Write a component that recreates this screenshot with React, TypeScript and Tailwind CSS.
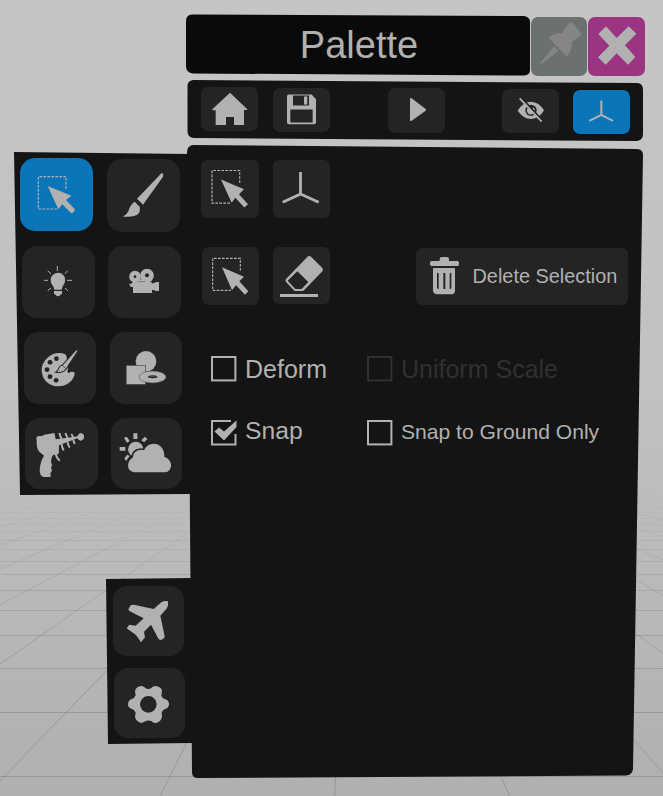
import React from "react";

const INK = "#b1b1b1";

type IconProps = { viewBox: string; children: React.ReactNode };

function Glyph({ viewBox, children }: IconProps) {
  return (
    <svg viewBox={viewBox} preserveAspectRatio="none" className="block h-full w-full" fill={INK} stroke="none">
      {children}
    </svg>
  );
}

function Key({ className, label, children }: { className: string; label: string; children: React.ReactNode }) {
  return (
    <button aria-label={label} className={`block shrink-0 overflow-hidden ${className}`}>
      {children}
    </button>
  );
}

function SelectShape() {
  return (
    <>
      <path d="M168 131V95H85V192H141" fill="none" stroke={INK} strokeWidth="3.6" strokeDasharray="8 4" />
      <path d="M113 123L184 152L168 165L194 192Q196 197 191 201Q187 205 182 203L157 178L145 193Z" />
    </>
  );
}

function Scene() {
  const rows = [776.5, 712.5, 668.5, 635.5, 610.5, 590.5, 574.5, 561.5, 549.5, 540.5, 531.5, 524.5, 518.5, 512.5, 507.5, 503.5, 499.5, 496.5];
  const rays = Array.from({ length: 20 }, (_, i) => -4.715 + i * 0.4685);
  return (
    <svg className="absolute inset-0 h-full w-full" viewBox="0 0 663 796">
      <defs>
        <linearGradient id="fade" gradientUnits="userSpaceOnUse" x1="0" y1="490" x2="0" y2="700">
          <stop offset="0" stopColor="#858585" stopOpacity="0" />
          <stop offset=".4" stopColor="#858585" stopOpacity=".3" />
          <stop offset="1" stopColor="#858585" stopOpacity=".6" />
        </linearGradient>
      </defs>
      <g stroke="url(#fade)" fill="none">
        {rows.map((y) => (
          <path key={y} d={`M0 ${y}L663 ${y + 0.01}`} strokeWidth="1" />
        ))}
        {rays.map((m) => (
          <path key={m} d={`M${346 + m * 67} 490L${346 + m * 374} 797`} strokeWidth="1" />
        ))}
      </g>
    </svg>
  );
}

function Check({ on, dim }: { on?: boolean; dim?: boolean }) {
  const c = dim ? "#303030" : INK;
  return (
    <svg width="28" height="28" viewBox="0 0 28 28" className="block shrink-0">
      {on ? (
        <>
          <path d="M21 2H2V25.5H25.500V15" fill="none" stroke={c} strokeWidth="2" />
          <path d="M4.500 12.500L9 8.500L14 12.500L26.500 1.500V8L14 21.500Z" fill={c} />
        </>
      ) : (
        <rect x="2" y="2" width="23.4" height="23.4" fill="none" stroke={c} strokeWidth="2" />
      )}
    </svg>
  );
}

function Option({ label, on, dim, text }: { label: string; on?: boolean; dim?: boolean; text: string }) {
  return (
    <label className="flex h-[28px] items-start whitespace-nowrap">
      <Check on={on} dim={dim} />
      <span className={`ml-[7px] ${text}`}>{label}</span>
    </label>
  );
}

function SideTools() {
  return (
    <nav className="ml-[14px] h-[343px] w-[176px] bg-[#141414] pt-[6px] [clip-path:polygon(0_0,176px_2px,176px_342px,6px_343px)]">
      <div className="flex h-[88px] gap-[14px] pl-[6px]">
        <Key label="Select" className="h-[73px] w-[73px] rounded-[15px] bg-[#0a75b8]">
          <Glyph viewBox="30 39 219 219"><SelectShape /></Glyph>
        </Key>
        <Key label="Brush" className="mt-px h-[73px] w-[73px] rounded-[15px] bg-[#242424]">
          <Glyph viewBox="291 42 219 219">
            <path d="M455 84Q461 84 459 95L399 179L381 161Z" />
            <path d="M374 170L389 185Q393 202 379 211Q362 217 339 215Q350 210 355 199Q361 178 374 170Z" />
          </Glyph>
        </Key>
      </div>
      <div className="flex h-[86px] gap-[13px] pl-[8px]">
        <Key label="Light" className="h-[72px] w-[73px] rounded-[15px] bg-[#242424]">
          <Glyph viewBox="36 303 219 216">
            <path d="M133 434Q132 427 127 420Q117 405 126 392Q134 383 144 383Q157 384 163 394Q169 407 160 421Q155 428 155 434Z" />
            <path d="M132 438H156V446Q154 449 151 449Q149 454 143 454Q138 453 137 449Q132 448 132 446Z" />
            <path d="M142 363V378M102 406H114M171 406H186M113 377L123 387M173 377L165 386M113 437L123 429M173 437L165 429" fill="none" stroke={INK} strokeWidth="3" />
          </Glyph>
        </Key>
        <Key label="Camera" className="h-[72px] w-[73px] rounded-[15px] bg-[#242424]">
          <Glyph viewBox="294 303 219 216">
            <circle cx="375" cy="395" r="17.5" />
            <circle cx="411" cy="392" r="20.5" />
            <path d="M380 403H406V410H425V416L440 411H447V438H440L426 434V444H369V426H361V421H358V416H364L370 409Z" />
            <circle cx="375" cy="395" r="4" fill="#242424" />
            <circle cx="411" cy="391" r="6" fill="#242424" />
            <path d="M383 410H405" stroke="#777" strokeWidth="3" />
          </Glyph>
        </Key>
      </div>
      <div className="flex h-[86px] gap-[13.5px] pl-[9.5px]">
        <Key label="Colors" className="h-[72px] w-[72.5px] rounded-[15px] bg-[#242424]">
          <Glyph viewBox="40 36 217 216">
            <path d="M164 103Q135 92 112 112Q91 130 93 155Q97 188 130 198Q162 203 182 182Q194 167 191 157Q181 153 175 159Q168 157 171 149Q174 141 169 132L168 112Z" />
            <circle cx="137" cy="116" r="7" fill="#242424" />
            <circle cx="118" cy="127" r="7.3" fill="#242424" />
            <circle cx="109" cy="149" r="7.3" fill="#242424" />
            <circle cx="118" cy="170" r="7.3" fill="#242424" />
            <circle cx="136" cy="181" r="7.3" fill="#242424" />
            <path d="M197 88L202 92L166 147Q158 160 134 157Q143 152 144 144Q148 136 154 136Z" stroke="#242424" strokeWidth="3" />
            <path d="M154 135L165 146" stroke="#242424" strokeWidth="2" />
          </Glyph>
        </Key>
        <Key label="Shapes" className="h-[72px] w-[72px] rounded-[15px] bg-[#242424]">
          <Glyph viewBox="298 36 216 216">
            <circle cx="406" cy="124" r="31" />
            <rect x="346.500" y="136" width="58" height="57" stroke="#484848" strokeWidth="2" />
            <ellipse cx="425.500" cy="171" rx="40.500" ry="18" stroke="#484848" strokeWidth="1.500" />
            <path d="M410 172Q417 165 426 165Q436 165 442 172Q426 177 410 172Z" fill="#1b1b1b" />
            <path d="M418 168H434" stroke={INK} strokeWidth="2" />
          </Glyph>
        </Key>
      </div>
      <div className="flex gap-[13px] pl-[11px]">
        <Key label="Ray gun" className="h-[71px] w-[72.5px] rounded-[15px] bg-[#242424]">
          <Glyph viewBox="45 294 217 213">
            <path d="M79 354Q80 348 87 348H97L102 344L133 339L137 358L149 356L195 350L202 349Q204 340 212 339Q222 341 222 351Q221 361 211 362Q204 361 202 355L147 376L146 401L131 404L127 407Q120 425 126 434L123 444L126 451L121 460L122 471H101Q88 468 89 447Q91 424 102 407L96 402Q80 393 80 372V362Z" />
            <path d="M148 339Q150 350 155 356M166 339Q169 349 173 354M184 342Q187 350 192 354M155 373Q155 382 161 391M173 367Q173 375 179 383M190 359Q190 367 195 371M137 401Q139 414 149 422" fill="none" stroke={INK} strokeWidth="6" />
          </Glyph>
        </Key>
        <Key label="Sky" className="h-[71px] w-[71.5px] rounded-[15px] bg-[#242424]">
          <Glyph viewBox="302 294 214 213">
            <circle cx="376" cy="388" r="23" />
            <path d="M369 340H381V357H369ZM341 354L349 350L358 363L350 368ZM403 350L411 357L401 367L393 361ZM328 381H345V392H328ZM342 415L351 404L358 408L347 423Z" />
            <path d="M372 457Q353 455 353 436Q354 420 367 413Q369 390 391 389L401 391Q409 372 430 371Q461 373 462 411Q481 417 482 437Q480 455 464 457Z" stroke="#242424" strokeWidth="9" />
            <path d="M372 457Q353 455 353 436Q354 420 367 413Q369 390 391 389L401 391Q409 372 430 371Q461 373 462 411Q481 417 482 437Q480 455 464 457Z" />
          </Glyph>
        </Key>
      </div>
    </nav>
  );
}

function SideSystem() {
  return (
    <nav className="ml-[106px] mt-[83px] flex h-[166px] w-[86px] flex-col gap-[12px] bg-[#141414] pl-[7px] pt-[8px] [clip-path:polygon(0_1px,86px_0,86px_165px,2px_166px)]">
      <Key label="Travel" className="h-[70px] w-[71px] rounded-[14px] bg-[#242424]">
        <Glyph viewBox="39 48 213 210">
          <path d="M85 118L92 106Q98 103 105 105L161 117L184 97Q194 91 204 94Q206 108 199 117L181 137L194 199Q195 206 182 210Q177 210 174 204L153 164L132 185L135 202L123 217L108 195L80 175L88 164L107 167L131 145L88 123Z" />
        </Glyph>
      </Key>
      <Key label="Settings" className="ml-px h-[70px] w-[71px] rounded-[14px] bg-[#242424]">
        <Glyph viewBox="42 294 213 210">
          <path fillRule="evenodd" d="M107 357Q114 347 125 348Q132 349 137 355Q145 359 153 355Q159 348 167 348Q181 349 186 361L184 377Q187 386 196 388Q207 391 207 403Q206 415 195 417Q187 420 185 428L186 441Q183 455 169 459Q160 460 154 453Q145 450 137 453Q130 460 121 458Q108 454 105 441L107 428Q103 419 96 417Q84 414 84 403Q85 389 96 387Q104 384 107 376L105 365ZM145 378A25 25 0 1 0 145 428A25 25 0 1 0 145 378Z" />
        </Glyph>
      </Key>
    </nav>
  );
}

function TitleBar() {
  return (
    <header className="-ml-px flex h-[62px] gap-px">
      <h1 className="h-[62px] w-[344px] bg-[#0a0a0a] pl-[2px] text-center text-[38px] leading-[62px] text-[#b1b1b1] [clip-path:path('M6_0.500L338_2Q344_3_344_8V56Q344_61_338_61.500L7_59.500Q0_59_0_52V7Q0_1_6_0.500Z')]">
        Palette
      </h1>
      <Key label="Pin" className="mt-[2.500px] h-[59px] w-[56px] rounded-[7px] bg-[#6b7071]">
        <svg viewBox="333 27 168 177" className="h-full w-full" fill="#858585">
          <path d="M450 44Q456 43 461 49L484 76Q486 82 479 84L456 103Q457 125 443 143L439 144L388 92V87Q404 75 426 75L444 49ZM404 113L417 127L369 165L361 169L365 160Z" />
          <path d="M402 112L414 127" stroke="#6b7071" strokeWidth="2" />
        </svg>
      </Key>
      <Key label="Close" className="mt-[3px] h-[59px] w-[57px] rounded-[7px] bg-[#9b3483]">
        <Glyph viewBox="503 28 171 177">
          <path d="M557 56L589 91L625 56L648 78L614 113L645 148L623 171L589 137L556 171L533 149L567 114L534 79Z" />
        </Glyph>
      </Key>
    </header>
  );
}

function Toolbar() {
  return (
    <div className="mt-[4px] flex h-[61px] w-[457px] bg-[#141414] pl-[14px] [clip-path:path('M6_0L450_3Q456_3_456_10V54Q456_60_450_61L7_58Q0.500_58_0.500_51V7Q0_1_6_0Z')]">
      <Key label="Home" className="mt-[7px] h-[44px] w-[57px] rounded-[7px] bg-[#242424]">
        <Glyph viewBox="63 237 171 132">
          <path d="M150 254L202 304V306H192V351H162V327H138V351H107V307H97V304Z" />
        </Glyph>
      </Key>
      <Key label="Save" className="ml-[15px] mt-[7.500px] h-[44px] w-[57px] rounded-[7px] bg-[#242424]">
        <Glyph viewBox="279 238.500 171 132">
          <path fillRule="evenodd" d="M326 258H395L408 272V341Q408 347 402 347H327Q321 347 321 341V264Q321 258 326 258ZM339 261V291H387V261ZM331 303V342H398V303Z" />
          <path d="M372 264H382V288H372Z" />
        </Glyph>
      </Key>
      <Key label="Play" className="ml-[58px] mt-[8px] h-[45px] w-[57px] rounded-[7px] bg-[#242424]">
        <Glyph viewBox="0 0 171 135">
          <path d="M66 33Q66 28 71 31L112 62Q117 66 112 69L71 98Q66 101 66 96Z" />
        </Glyph>
      </Key>
      <Key label="Hide" className="ml-[57px] mt-[9px] h-[44px] w-[57px] rounded-[7px] bg-[#242424]">
        <Glyph viewBox="246 243 171 132">
          <path d="M293 308Q309 281 333 281Q357 282 372 307Q358 332 333 333Q309 332 293 308Z" />
          <circle cx="333" cy="307" r="17" fill="#242424" />
          <path d="M324 299A12 12 0 1 0 340 298L337 307Z" />
          <path d="M303 268L370 340" stroke="#242424" strokeWidth="6" />
          <path d="M299 271L365 341" stroke={INK} strokeWidth="5" />
        </Glyph>
      </Key>
      <Key label="Axes" className="ml-[14px] mt-[9.500px] h-[44px] w-[57px] rounded-[7px] bg-[#0a75b8]">
        <Glyph viewBox="459 244.500 171 132">
          <path d="M544 276V319L508 337M544 319L579 337" fill="none" stroke={INK} strokeWidth="6" />
        </Glyph>
      </Key>
    </div>
  );
}

function Workspace() {
  return (
    <main className="mt-[4px] h-[634px] w-[457px] bg-[#141414] [clip-path:path('M6_0L450_4Q456_4_456_10L446_624Q445_630_439_630.500L11_633Q5_633_5_627L0_7Q0_1_6_0Z')]">
      <div className="flex gap-[14px] pl-[14px] pt-[14.500px]">
        <Key label="Box select" className="h-[58px] w-[58px] rounded-[6px] bg-[#242424]">
          <Glyph viewBox="33 43.500 174 174">
            <path d="M149 112V75H66V173H121" fill="none" stroke={INK} strokeWidth="3.600" strokeDasharray="8 4" />
            <path d="M93 102L162 131L147 146L174 176L163 186L136 157L125 172Z" />
          </Glyph>
        </Key>
        <Key label="Move axes" className="mt-[0.500px] h-[58px] w-[57px] rounded-[6px] bg-[#242424]">
          <Glyph viewBox="249 45 171 174">
            <path d="M331.500 81V147L278 172M331.500 147L386 172" fill="none" stroke={INK} strokeWidth="8.500" />
          </Glyph>
        </Key>
      </div>
      <div className="flex pl-[15px] pt-[28.500px]">
        <Key label="Select again" className="h-[58px] w-[57px] rounded-[6px] bg-[#242424]">
          <Glyph viewBox="36 303 171 174">
            <path d="M151 374V337H68V433H122" fill="none" stroke={INK} strokeWidth="3.400" strokeDasharray="8 4" />
            <path d="M96 364L162 392L148 406L175 436L165 446L138 418L126 433Z" />
          </Glyph>
        </Key>
        <Key label="Erase" className="ml-[14px] mt-[0.500px] h-[57px] w-[57px] rounded-[6px] bg-[#242424]">
          <Glyph viewBox="249 306 171 171">
            <path fillRule="evenodd" d="M354 334Q359 331 363 335L397 369Q401 374 397 379L342 436L339 438H314L288 411Q284 407 288 402ZM322 379L293 407L316 432H335L355 411Z" />
            <path d="M270 447H384V456H270Z" />
          </Glyph>
        </Key>
        <button className="ml-[86px] mt-px flex h-[57px] w-[212px] items-center rounded-[6px] bg-[#242424]">
          <svg viewBox="48 39 159 171" className="h-[57px] w-[53px] shrink-0" fill={INK}>
            <path d="M119 78V72Q119 66 125 66H140Q147 66 147 72V78H173Q177 79 177 84V89Q177 93 172 93H94Q90 92 90 88V84Q90 78 95 78Z" />
            <path fillRule="evenodd" d="M99 99H165V168Q164 177 156 178H109Q101 177 99 168ZM111 113V160L116 163V115ZM130 114V162H136V114ZM149 115V163L154 160V113Z" />
          </svg>
          <span className="ml-[3.500px] whitespace-nowrap text-[19.900px] leading-[55px] text-[#b1b1b1]">Delete Selection</span>
        </button>
      </div>
      <div className="mt-[50px] grid grid-cols-[156px_auto] gap-y-[36px] pl-[23px] text-[#b1b1b1]">
        <Option label="Deform" text="text-[25px] leading-[28px]" />
        <Option label="Uniform Scale" dim text="text-[25px] leading-[28px] text-[#303030]" />
        <Option label="Snap" on text="text-[24.700px] leading-[24px]" />
        <Option label="Snap to Ground Only" text="text-[21.100px] leading-[25px]" />
      </div>
    </main>
  );
}

export default function App() {
  return (
    <div className="relative h-[796px] w-[663px] overflow-hidden bg-linear-to-b from-[#c5c5c5] via-[#c1c1c0] to-[#b0b0af] font-['Liberation_Sans',Arial,sans-serif]">
      <Scene />
      <div className="relative flex">
        <aside className="w-[187px] shrink-0 pt-[152px]">
          <SideTools />
          <SideSystem />
        </aside>
        <section className="w-[458px] shrink-0 pt-[14px]">
          <TitleBar />
          <Toolbar />
          <Workspace />
        </section>
      </div>
    </div>
  );
}
